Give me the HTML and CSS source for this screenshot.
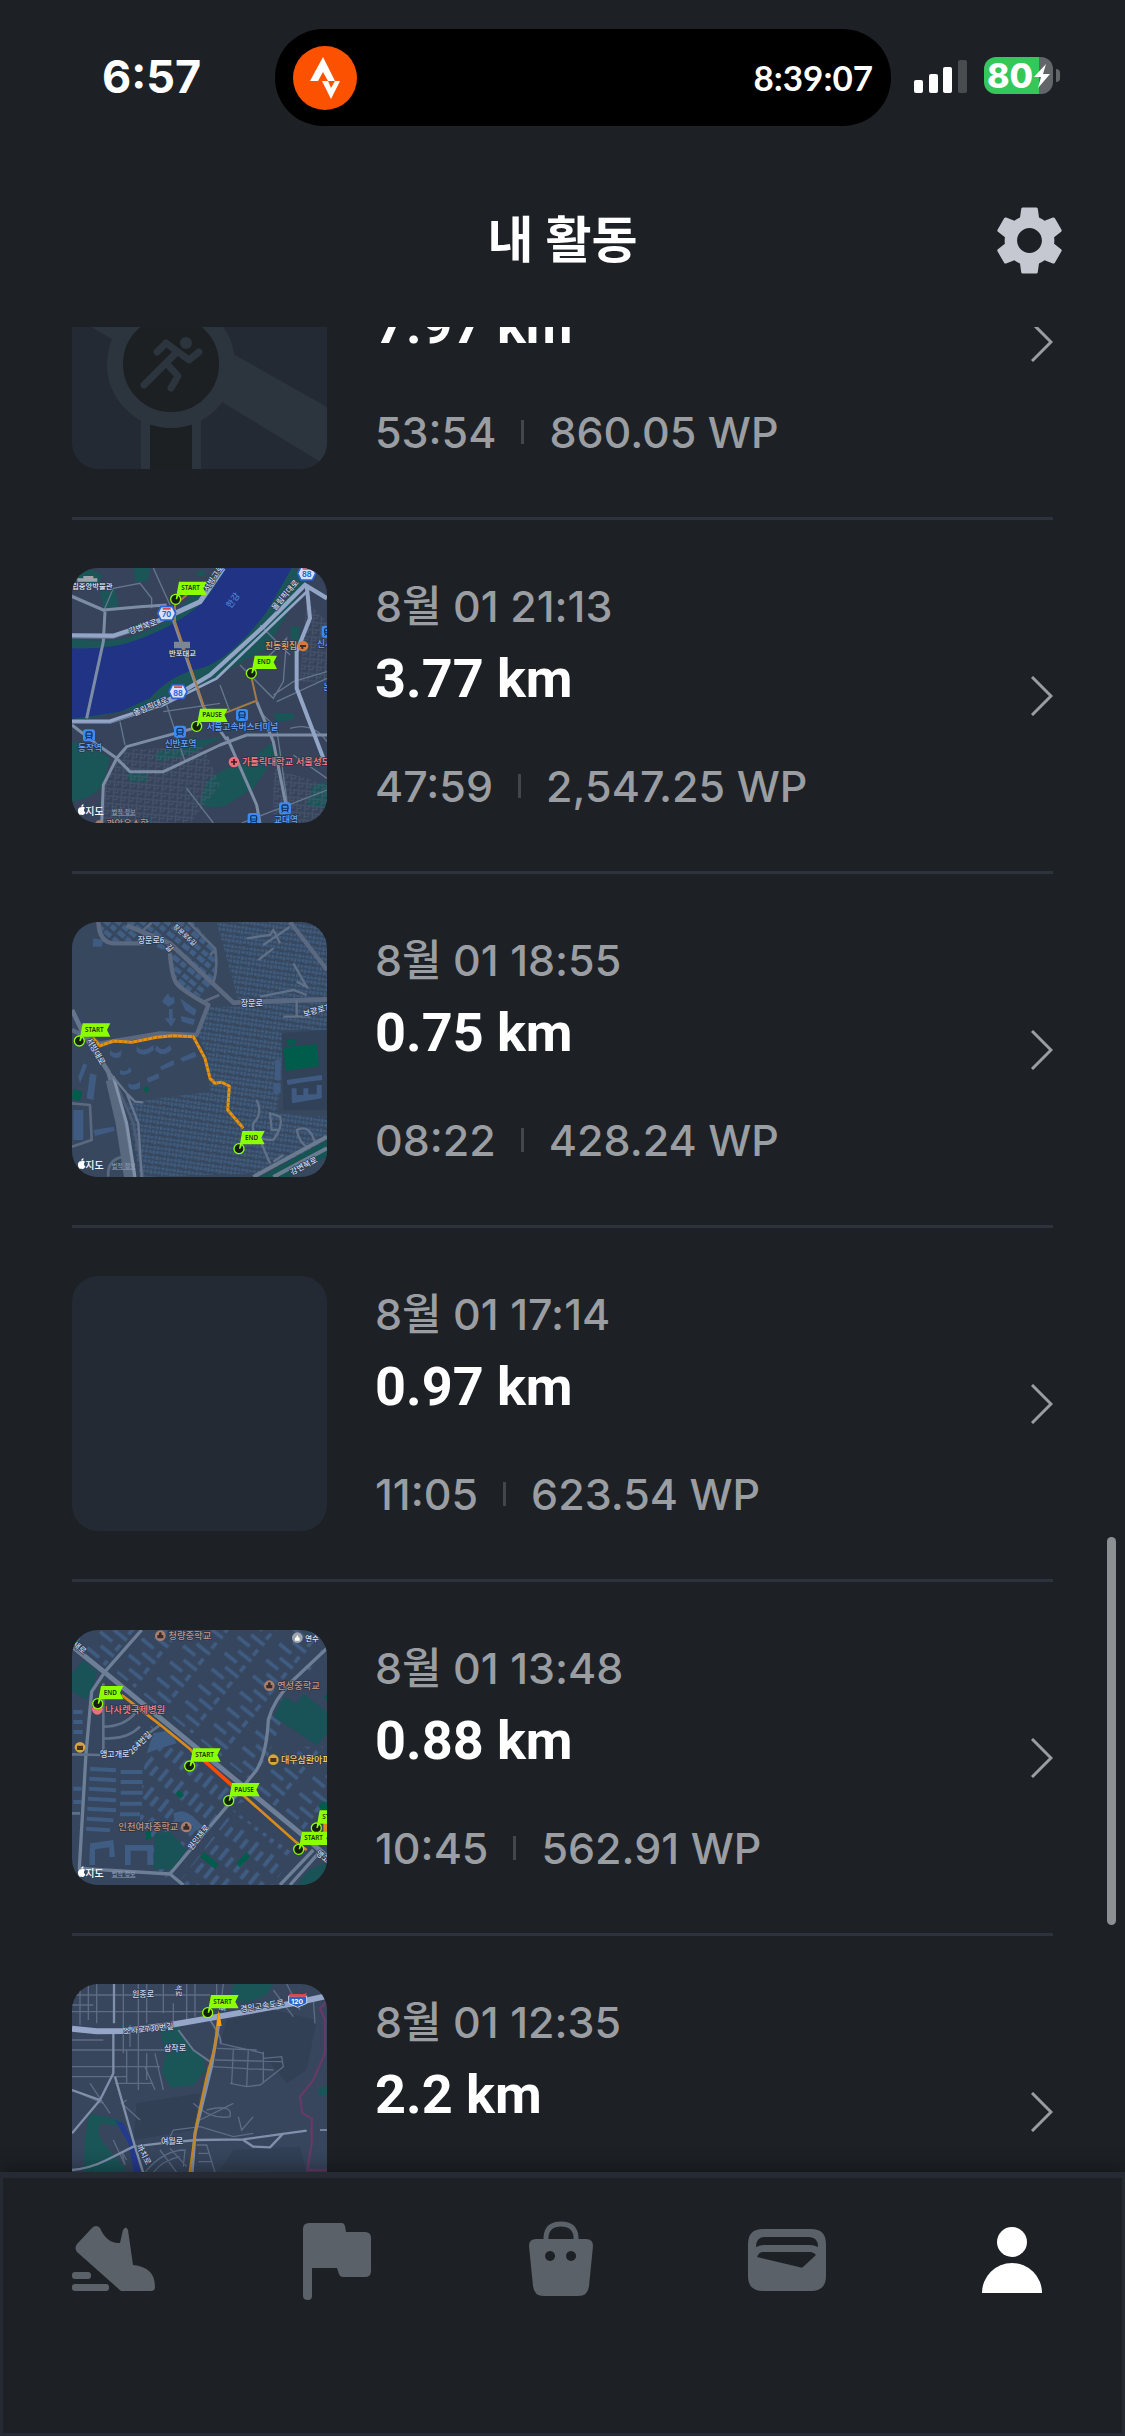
FILE: index.html
```html
<!DOCTYPE html>
<html lang="ko">
<head>
<meta charset="utf-8">
<meta name="viewport" content="width=device-width, initial-scale=1">
<title>내 활동</title>
<link rel="stylesheet" href="styles.css">
</head>
<body>
<svg class="defs" width="0" height="0" aria-hidden="true">
  <defs>
    <g id="flag-long"><circle r="15" fill="#17200f" stroke="#8cff00" stroke-width="4"/><path d="M0 0 10-53H93L83-33 93-13H10L4 0Z" fill="#8cff00"/></g>
    <g id="flag-short"><circle r="15" fill="#17200f" stroke="#8cff00" stroke-width="4"/><path d="M0 0 10-53H77L67-33 77-13H10L4 0Z" fill="#8cff00"/></g>
    <g id="shield"><path d="M-17-20H17L27 0 17 20H-17L-27 0Z" fill="#d7e0f5" stroke="#2c62d6" stroke-width="5"/><path d="M-12-16H12V-11H-12Z" fill="#d94b4b"/></g>
    <g id="station"><rect x="-18" y="-18" width="36" height="36" rx="8" fill="#3d8bf2"/><rect x="-9" y="-10" width="18" height="17" rx="5" fill="none" stroke="#15355f" stroke-width="4"/><path d="M-9 0H9M-6 7-10 13M6 7 10 13" stroke="#15355f" stroke-width="3"/></g>
    <g id="school"><circle r="16" fill="#a87f6c"/><path d="M-9 8V-2H-4V-8L0-11 4-8V-2H9V8Z" fill="#3a2a28"/></g>
    <g id="credit"><path d="M64 757c4-3 9-1 11 2-5 4-3 11 1 13-3 8-7 9-11 7-5 2-9-1-11-9-1-9 3-14 10-13Zm0-2c0-5 3-7 7-7 0 4-3 7-7 7Z" fill="#fff"/><text x="76" y="779" class="m-brand">지도</text><text x="155" y="777" class="m-legal">법적 정보</text></g>
    <pattern id="houses" width="34" height="30" patternUnits="userSpaceOnUse" patternTransform="rotate(8)"><path d="M1 2h10v8H1zM14 1h7v11h-7zM24 3h8v7h-8zM2 14h7v12H2zM12 16h11v7H12zM26 14h7v10h-7z" fill="#405c7e"/></pattern>
    <pattern id="roofs" width="58" height="46" patternUnits="userSpaceOnUse" patternTransform="rotate(39)"><path d="M3 4h20v14H3zM28 4h24v14H28zM3 25h24v15H3zM33 25h18v15H33z" fill="#415f85"/></pattern>
    <pattern id="slabs-a" width="110" height="62" patternUnits="userSpaceOnUse" patternTransform="rotate(39)"><path d="M6 8h46v11H6zM72 6h11v22H72zM34 40h50v11H34z" fill="#3f5c82"/></pattern>
    <pattern id="slabs-b" width="58" height="70" patternUnits="userSpaceOnUse" patternTransform="rotate(39)"><path d="M6 5h12v44H6zM34 18h12v34H34z" fill="#3f5c82"/></pattern>
    <pattern id="lanes" width="24" height="22" patternUnits="userSpaceOnUse" patternTransform="rotate(5)"><path d="M0 3H24M6 3V22M18 3V13H6" stroke="#4f5e73" stroke-width="2" fill="none"/></pattern>
  </defs>
</svg>

<header class="top">
  <div class="status">
    <span class="clock">6:57</span>
    <div class="island">
      <svg class="island-logo" viewBox="0 0 64 64" aria-label="Strava"><circle cx="32" cy="32" r="32" fill="#fc5200"/><path d="M30 11 17 35H25L30 26 35 35H42Z" fill="#fff"/><path d="M29 35H35L38 42 42 35H47L38 53Z" fill="#fff"/></svg>
      <span class="island-time">8:39:07</span>
    </div>
    <div class="indicators">
      <svg class="signal" viewBox="0 0 54 34" aria-hidden="true"><g fill="#fff"><rect y="21" width="9" height="13" rx="2"/><rect x="15" y="15" width="9" height="19" rx="2"/><rect x="29" y="8" width="9" height="26" rx="2"/></g><rect x="44" y="1" width="9" height="33" rx="2" fill="#484c4f"/></svg>
      <div class="battery"><span class="battery-level">80</span><svg class="bolt" viewBox="0 0 18 26" aria-hidden="true"><path d="M13 1 1 14H8L5 25 17 11H10Z" fill="#fff"/></svg></div>
    </div>
  </div>
  <div class="titlebar">
    <h1 class="title">내 활동</h1>
    <button class="settings" type="button" aria-label="설정"><svg viewBox="2 2 20 20"><path fill="#c5c8d0" d="M19.14 12.94c.04-.3.06-.61.06-.94 0-.32-.02-.64-.07-.94l2.03-1.58c.18-.14.23-.41.12-.61l-1.92-3.32c-.12-.22-.37-.29-.59-.22l-2.39.96c-.5-.38-1.03-.7-1.62-.94L14.4 2.81c-.04-.24-.24-.41-.48-.41h-3.84c-.24 0-.43.17-.47.41L9.25 5.35C8.66 5.59 8.12 5.92 7.63 6.29L5.24 5.33c-.22-.08-.47 0-.59.22L2.74 8.87c-.12.21-.08.47.12.61l2.03 1.58C4.84 11.36 4.8 11.69 4.8 12s.02.64.07.94l-2.03 1.58c-.18.14-.23.41-.12.61l1.92 3.32c.12.22.37.29.59.22l2.39-.96c.5.38 1.03.7 1.62.94l.36 2.54c.05.24.24.41.48.41h3.84c.24 0 .44-.17.47-.41l.36-2.54c.59-.24 1.13-.56 1.62-.94l2.39.96c.22.08.47 0 .59-.22l1.92-3.32c.12-.22.07-.47-.12-.61L19.14 12.94zM12 15.6c-1.98 0-3.6-1.62-3.6-3.6s1.62-3.6 3.6-3.6 3.6 1.62 3.6 3.6-1.62 3.6-3.6 3.6z"/></svg></button>
  </div>
</header>

<main class="feed">
  <ul class="list">
    <li class="item"><a class="row" href="#activity-1">
      <svg class="thumb" viewBox="0 0 255 255" aria-hidden="true">
        <path d="M-40 78 99 160 150 188 255 252V193L163 141 60 82-20 40Z" fill="#2c343e"/>
        <path d="M78 200H120V255H78Z" fill="#1c2023"/><path d="M69 195H78V255H69ZM120 195H129V255H120Z" fill="#2c343e"/>
        <circle cx="99" cy="150" r="56" fill="#1c2023" stroke="#2c343e" stroke-width="16"/>
        <circle cx="114" cy="129" r="6" fill="#2c343e"/>
        <path d="M85 138 94 129 117 146 127 138M72 171 104 139M97 152 106 162 99 174" fill="none" stroke="#2c343e" stroke-width="7" stroke-linecap="round" stroke-linejoin="round"/>
      </svg>
      <div class="info"><span class="date">8월 01 22:20</span><strong class="distance">7.97 km</strong><span class="stats"><span>53:54</span><span class="bar"></span><span>860.05 WP</span></span></div>
      <svg class="chevron" viewBox="0 0 22 40" aria-hidden="true"><path d="M1 1 20 20 1 39"/></svg>
    </a></li>

    <li class="item"><a class="row" href="#activity-2">
      <svg class="thumb" viewBox="36 39 765 765" aria-hidden="true">
        <path d="M36 39H801V804H36Z" fill="#36435a"/>
        <path d="M36 560Q100 570 150 610L130 690Q100 730 36 740ZM36 39H80L130 60 110 90 36 70ZM220 39H270L262 80H225ZM120 110 165 100 175 155 130 160ZM440 680Q480 640 560 620L640 560 650 600 580 700 500 750Q440 770 420 740ZM280 600 370 560 490 545 380 600 300 620ZM640 475H700V495L650 500ZM690 215H720L715 300H700ZM760 690 801 680V760L740 750ZM200 655H260V680H210ZM410 48H435V62H412Z" fill="#1a5558"/>
        <path d="M36 250Q200 280 330 190L480 39H495L700 39 740 80 620 280 460 370 290 450 36 500Z" fill="#1b5558"/>
        <path d="M36 280Q150 285 230 255 340 215 400 165 450 130 495 39H695L620 170Q500 330 400 345 320 370 270 430L180 470 36 492Z" fill="#213384"/>
        <path d="M180 585 430 575 480 690 390 804H130V690ZM640 640 801 690V804H640ZM740 140 801 200V380H720Z" fill="url(#lanes)"/>
        <g fill="none" stroke="#65768e" stroke-width="4"><path d="M320 450 375 620M180 500 195 570M310 470 480 445M480 390 510 470M540 330 640 430 670 380 680 250 570 360M600 210 690 300M650 440 801 370M36 120 135 165M280 39 330 150M130 170 160 100 240 85 275 130V160M600 470 650 520 690 800M700 600 801 670M380 700 460 804M545 804 801 705M640 420 700 380 801 350M690 520Q760 500 801 560"/></g>
        <g fill="none" stroke="#7d8ca5" stroke-width="9" stroke-linejoin="round"><path d="M36 125 130 165 240 155 320 150M135 170 130 260 80 490M500 545 590 750 600 804M36 510 100 560 170 610 210 650 310 650 480 570 560 540 801 540M170 610 130 690 125 804M170 610 200 575 400 520M590 440 640 560 680 760M500 555 430 455 340 195"/></g>
        <g fill="none" stroke="#93a5c6"><path d="M36 242 160 243 290 200 420 140 490 39" stroke-width="15"/><path d="M36 500H150L300 450 450 360 610 215 735 90 801 130" stroke-width="13"/><path d="M300 455 470 370 740 110" stroke-width="8"/><path d="M740 90 750 190 710 290V400L790 610" stroke-width="12"/></g>
        <path d="M36 248 160 250 290 208M36 505H150L290 455" fill="none" stroke="#4d5c78" stroke-width="2"/>
        <path d="M380 120 345 150 345 200 432 455 430 475 500 472 590 437 575 370" fill="none" stroke="#a47b46" stroke-width="6"/>
        <text x="36" y="103" class="m-white">립중앙박물관</text><path d="M52 70H112V80H52ZM70 63H100V70H70Z" fill="#9ca4ae"/>
        <text x="210" y="238" class="m-road" transform="rotate(-20 210 238)">강변북로</text>
        <text x="224" y="483" class="m-road" transform="rotate(-23 224 483)">올림픽대로</text>
        <text x="646" y="168" class="m-road" transform="rotate(-50 646 168)">올림픽대로</text>
        <text x="442" y="110" class="m-road" transform="rotate(-55 442 110)">서빙고로</text>
        <text x="512" y="162" class="m-water" transform="rotate(-55 512 162)">한강</text>
        <path d="M342 260H390V280H342Z" fill="#7c8694"/><text x="327" y="304" class="m-white">반포대교</text>
        <text x="615" y="283" class="m-food">진동횟집</text><circle cx="729" cy="273" r="16" fill="#d27a3e"/><path d="M720 270H738V276H730V282H724V276H720Z" fill="#4c2a19"/>
        <use href="#station" x="87" y="541"/><text x="54" y="587" class="m-rail">동작역</text>
        <use href="#station" x="360" y="530"/><text x="314" y="576" class="m-rail">신반포역</text>
        <use href="#station" x="546" y="480"/><text x="440" y="525" class="m-rail">서울고속버스터미널</text>
        <use href="#station" x="675" y="760"/><text x="642" y="803" class="m-rail">교대역</text>
        <use href="#station" x="581" y="792"/><use href="#station" x="803" y="230"/><text x="771" y="275" class="m-rail">신사</text><text x="790" y="405" class="m-rail">논</text>
        <circle cx="522" cy="621" r="16" fill="#e9707a"/><path d="M513 621H531M522 612V630" stroke="#3b1a26" stroke-width="5"/><text x="545" y="631" class="m-med">가톨릭대학교 서울성모병원</text>
        <use href="#shield" x="320" y="175"/><text x="306" y="187" class="m-num">70</text><use href="#shield" x="354" y="410"/><text x="340" y="422" class="m-num">88</text><use href="#shield" x="740" y="55"/><text x="726" y="67" class="m-num">88</text>
        <use href="#flag-long" x="347" y="133"/><text x="364" y="106" class="m-flag">START</text>
        <use href="#flag-short" x="574" y="355"/><text x="592" y="328" class="m-flag">END</text>
        <use href="#flag-long" x="410" y="514"/><text x="427" y="487" class="m-flag">PAUSE</text>
        <use href="#credit"/><circle cx="118" cy="810" r="14" fill="#a87f6c"/><text x="138" y="815" class="m-school">관악우스함</text>
      </svg>
      <div class="info"><span class="date">8월 01 21:13</span><strong class="distance">3.77 km</strong><span class="stats"><span>47:59</span><span class="bar"></span><span>2,547.25 WP</span></span></div>
      <svg class="chevron" viewBox="0 0 22 40" aria-hidden="true"><path d="M1 1 20 20 1 39"/></svg>
    </a></li>

    <li class="item"><a class="row" href="#activity-3">
      <svg class="thumb" viewBox="36 36 765 765" aria-hidden="true">
        <path d="M36 36H801V801H36Z" fill="#36475e"/>
        <path d="M470 36H801V360H665V500L650 610 801 620V700L600 790 240 801 200 580 330 560 450 545 440 430 410 370 440 290 540 290Z" fill="url(#houses)"/>
        <path d="M120 36H400L470 120 460 220 420 260 345 220 335 130 250 95H125Z" fill="url(#roofs)"/>
        <path d="M665 370 801 360V600L670 600Z" fill="#314158"/>
        <path d="M315 260 325 250 330 262H343V280L325 290 306 275ZM327 297H338V325H348L334 350 314 325H327ZM360 265 410 300 403 318 375 300ZM362 318 405 328 400 345 365 335ZM290 405Q305 430 330 405L335 420Q308 445 285 420ZM230 410Q250 430 280 405L282 420Q250 445 230 425ZM150 420Q165 440 185 420L182 440Q162 450 150 435ZM180 480Q200 490 210 470L215 485Q195 500 180 492ZM205 520Q220 530 240 515L240 535Q215 545 205 530ZM260 505 295 490 298 505 265 518ZM300 470 340 450 343 465 305 480ZM360 445 405 425 410 440 368 455ZM55 500 70 460 82 465 60 520ZM90 490 110 495 100 570 80 565ZM100 660 160 650 165 662 105 678ZM645 450H662V510H645ZM680 510 785 495 787 510 730 517 683 525ZM695 570V535H710V555H730V535H745V553H770V525H785V565L697 580ZM640 520H662V550H640ZM100 85 130 90 125 110H98ZM40 600H70V690H40Z" fill="#405b82"/>
        <path d="M669 412 770 402 777 468 677 482ZM680 390 708 386V402L682 405ZM40 537 67 545 60 573 36 568ZM249 538 260 527 268 538 259 549Z" fill="#005d4c"/>
        <path d="M600 801 801 690V740L690 801Z" fill="#155452"/>
        <g fill="none" stroke="#5b6980" stroke-linejoin="round"><path d="M115 36Q118 98 160 100H250M330 130Q335 200 350 220T445 285L410 375 300 370 120 400 36 360M690 36 801 180" stroke-width="13"/><path d="M200 46 330 100 520 278 801 268" stroke-width="14"/><path d="M385 36 465 115Q475 170 460 220M430 275 478 255M250 60 275 38M450 135 468 118M145 800Q140 750 190 740M36 580 90 585 95 690 36 710" stroke-width="8"/></g>
        <g fill="none" stroke="#5f7087" stroke-width="7"><path d="M560 85 630 75 640 60 660 100M610 105 690 50M595 150 640 115M700 160 740 230 710 215M600 260 700 240 740 255M710 270V320H670M670 320H750M590 570Q610 610 580 640 570 690 640 690 670 650 660 620L630 610 635 660H655M600 690 630 760M765 700Q750 640 710 660 720 700 740 710M640 755 670 735"/></g>
        <g fill="none"><path d="M36 300 70 370 145 485 190 640 215 801" stroke="#65758d" stroke-width="14"/><path d="M150 510 180 640 205 801" stroke="#59697f" stroke-width="26"/><path d="M160 500 220 640 250 801" stroke="#4c5c74" stroke-width="8"/><path d="M160 500 200 640 225 801" stroke="#8292aa" stroke-width="9"/><path d="M150 490 200 550 235 640 245 801M200 550 225 575 250 577" stroke="#66778f" stroke-width="7"/><path d="M580 801 801 680M640 801 801 715" stroke="#6b7b90" stroke-width="12"/></g>
        <path d="M98 382 118 408 160 393 215 397 290 382 340 377 400 380 435 445 450 505 465 520 485 517 508 528 503 600 550 655" fill="none" stroke="#e09413" stroke-width="9" stroke-linejoin="round"/><path d="M98 382 118 408 160 393 215 397 290 382 340 377 400 380 435 445 450 505 465 520 485 517 508 528 503 600 550 655" fill="none" stroke="#c86a0c" stroke-width="9" stroke-dasharray="3 12"/>
        <text x="233" y="98" class="m-road">장문로6</text><text x="314" y="112" class="m-road" transform="rotate(45 314 112)">길</text>
        <text x="338" y="52" class="m-road small" transform="rotate(42 338 52)">장문로6길</text>
        <text x="542" y="287" class="m-road">장문로</text><text x="732" y="320" class="m-road" transform="rotate(-15 732 320)">보광로7길</text>
        <text x="78" y="390" class="m-road" transform="rotate(60 78 390)">서빙대로</text><text x="696" y="796" class="m-road" transform="rotate(-28 696 796)">강변북로</text>
        <use href="#flag-long" x="58" y="393"/><text x="75" y="366" class="m-flag">START</text>
        <use href="#flag-short" x="537" y="716"/><text x="555" y="689" class="m-flag">END</text>
        <use href="#credit" y="-3"/>
      </svg>
      <div class="info"><span class="date">8월 01 18:55</span><strong class="distance">0.75 km</strong><span class="stats"><span>08:22</span><span class="bar"></span><span>428.24 WP</span></span></div>
      <svg class="chevron" viewBox="0 0 22 40" aria-hidden="true"><path d="M1 1 20 20 1 39"/></svg>
    </a></li>

    <li class="item"><a class="row" href="#activity-4">
      <div class="thumb"></div>
      <div class="info"><span class="date">8월 01 17:14</span><strong class="distance">0.97 km</strong><span class="stats"><span>11:05</span><span class="bar"></span><span>623.54 WP</span></span></div>
      <svg class="chevron" viewBox="0 0 22 40" aria-hidden="true"><path d="M1 1 20 20 1 39"/></svg>
    </a></li>

    <li class="item"><a class="row" href="#activity-5">
      <svg class="thumb" viewBox="36 30 765 765" aria-hidden="true">
        <path d="M36 30H801V795H36Z" fill="#36465e"/>
        <path d="M230 30H801V90L700 210 620 420 570 480 170 160ZM36 30H230L140 140 36 70Z" fill="url(#slabs-a)"/>
        <path d="M130 190 570 540 500 560 330 760 300 795 240 600 250 450 280 330ZM520 570 700 700 640 795H350Z" fill="url(#slabs-b)"/>
        <path d="M655 380 801 380V680L720 650 570 500Z" fill="url(#slabs-a)"/>
        <path d="M90 440 168 445V457L90 453ZM88 470 168 475V487L88 482ZM86 500 168 505V517L86 512ZM84 530 168 535V547L84 542ZM82 560 168 565V577L82 572ZM80 590 160 595V607L80 602ZM78 620 150 625V637L78 632ZM182 450H248V462H182ZM182 480H248V492H182ZM182 512H248V524H182ZM180 545H246V557H180ZM180 577H240V589H180ZM40 270H68V282H40ZM40 300H68V312H40ZM40 330H68V342H40ZM40 500H65V512H40ZM40 540H65V552H40ZM90 670 160 660 165 710 148 712V682L105 688V735H88ZM195 675H280V735H262V692H212V735H195ZM280 340 330 330 350 370 300 385 260 400ZM340 580Q370 565 400 590L430 620 415 635 380 605H345Z" fill="#3f5c82"/>
        <path d="M70 120 112 155 100 200 80 240 36 215V160ZM640 290 670 230 710 250 730 222 801 275V340L772 376ZM285 640 330 635 380 690 340 748H280ZM715 795Q740 740 801 730V795Z" fill="#1a5357"/><path d="M421 710 432 697 475 732 465 747ZM528 730 560 697 570 710 540 742ZM346 522 356 510 372 524 362 536ZM258 636 273 630V655L258 660ZM775 560 790 543 801 550V580ZM792 230 801 222V240Z" fill="#005d4c"/>
        <g fill="none" stroke="#6d7e97" stroke-linejoin="round"><path d="M36 78 135 158 740 655 801 710" stroke-width="15"/><path d="M245 30 135 155 95 215 78 400 58 745 330 762 370 795M330 762 500 560 590 450Q620 400 625 300 640 240 700 180L801 85M660 795 760 690M690 795 775 700" stroke-width="10"/><path d="M130 190V400M130 320Q190 320 225 280M130 355Q200 360 240 320M36 403 120 405M36 580H60M225 370 300 315" stroke-width="8" stroke="#5f7089"/></g>
        <path d="M185 225 295 310 390 387 410 410M520 500 560 535 710 668 740 690" fill="none" stroke="#d68a1c" stroke-width="8"/><path d="M425 415 520 500" stroke="#ff4a00" stroke-width="11"/>
        <path d="M790 610 801 600V640H790Z" fill="#e08914"/>
        <use href="#school" x="301" y="47"/><text x="325" y="57" class="m-school">청량중학교</text>
        <circle cx="712" cy="53" r="16" fill="#9da4ac"/><path d="M705 62V53H708L712 44 716 53H719V62Z" fill="#fff"/><text x="736" y="62" class="m-white">연수</text>
        <use href="#school" x="628" y="197"/><text x="651" y="207" class="m-school">연성중학교</text>
        <use href="#school" x="379" y="621"/><text x="175" y="631" class="m-school">인천여자중학교</text>
        <circle cx="60" cy="382" r="16" fill="#d7a43e"/><path d="M51 377H69V390H51Z" fill="#4a3516"/><circle cx="640" cy="419" r="16" fill="#d7a43e"/><path d="M631 414H649V426H631Z" fill="#4a3516"/><text x="663" y="430" class="m-shop">대우삼환아파트</text>
        <circle cx="112" cy="268" r="16" fill="#e9707a"/><text x="135" y="278" class="m-med">나사렛국제병원</text>
        <text x="120" y="410" class="m-road">앵고개로</text><text x="216" y="405" class="m-road" transform="rotate(-45 216 405)">264번길</text>
        <text x="36" y="75" class="m-road" transform="rotate(40 36 75)">새로</text><text x="395" y="692" class="m-road" transform="rotate(-52 395 692)">원인재로</text><text x="766" y="702" class="m-road" transform="rotate(40 766 702)">앵고개로</text>
        <use href="#flag-short" x="113" y="251"/><text x="131" y="224" class="m-flag">END</text>
        <use href="#flag-long" x="389" y="438"/><text x="406" y="411" class="m-flag">START</text>
        <use href="#flag-long" x="506" y="542"/><text x="523" y="515" class="m-flag">PAUSE</text>
        <use href="#flag-long" x="769" y="624"/><text x="787" y="597" class="m-flag">START</text>
        <use href="#flag-long" x="716" y="688"/><text x="733" y="661" class="m-flag">START</text>
        <use href="#credit" y="-9"/>
      </svg>
      <div class="info"><span class="date">8월 01 13:48</span><strong class="distance">0.88 km</strong><span class="stats"><span>10:45</span><span class="bar"></span><span>562.91 WP</span></span></div>
      <svg class="chevron" viewBox="0 0 22 40" aria-hidden="true"><path d="M1 1 20 20 1 39"/></svg>
    </a></li>

    <li class="item"><a class="row" href="#activity-6">
      <svg class="thumb" viewBox="36 42 765 765" aria-hidden="true">
        <path d="M36 42H801V807H36Z" fill="#37465d"/>
        <path d="M500 150 640 120 770 150 740 300 680 340 600 240 480 220ZM230 400 420 370 400 480 220 510ZM520 540 720 530 740 607 480 600Z" fill="#324055"/>
        <path d="M302 180 355 170 375 210 400 240 430 265 438 300 400 345 335 355 305 310 315 260ZM520 42H640L620 75 560 100 510 90ZM90 430 180 450 190 470 120 460 115 490 130 520 200 600 70 620 75 500ZM772 360 801 345V375H775Z" fill="#1a5558"/>
        <path d="M165 450 190 460 220 520 245 620H225L205 520Z" fill="#243a8f"/>
        <g fill="none" stroke="#5d6c83" stroke-width="4"><path d="M60 42V165M85 42V150M110 42V160M190 42V250M235 42V360M260 42V160M310 42V130M340 100V160M405 42V140M36 75H450M36 105H100M36 125H440M36 210H130M36 240H380M36 290H300M36 320H200M165 340H280M200 240V340M260 250V330M285 250 310 360M255 290 285 360M210 165V230M380 42V150M470 235 590 240M480 220 610 250M465 270 665 275M455 290 640 300M510 340 560 350 600 345 670 290 665 260 610 265M520 240 515 340M565 240 560 350M610 245V340M445 290 440 330M640 60 700 140M680 42 720 120M620 100 760 90M650 120 740 70M760 90 765 160M470 42V80M490 42 480 120M200 390 185 400 240 450M90 340 150 430M36 360 130 400M420 450 520 400M400 400Q450 450 510 440 520 400 440 420M535 440 545 480 580 440M320 520 340 480 420 470 520 500 580 490M255 607Q310 540 375 540L370 590M280 607Q310 570 360 560M300 540 350 607M330 535 380 590M410 525H440L465 607M415 550H450M415 575H455M160 510 195 585 185 545 200 570"/></g>
        <g fill="none" stroke="#8090aa" stroke-linejoin="round"><path d="M162 42V160M160 185V310L120 390 36 490M165 320 225 530 255 625M36 600Q90 595 140 570L220 530 300 520 410 510 550 508 740 482M550 510 580 530 630 532 670 490M36 360 120 390" stroke-width="7"/><path d="M780 480H801" stroke-width="5"/><path d="M355 180 400 240 450 275M450 150Q490 210 480 220" stroke-width="6" stroke="#66768d"/><path d="M36 176 110 184 190 183 330 165 475 140 700 100 792 80" stroke-width="18" stroke="#95a6c8"/><path d="M478 150 455 285 405 490 395 620" stroke-width="10"/></g>
        <path d="M801 95 780 115 795 150V250L760 330 720 380 727 430 755 445V520L742 600H801" fill="none" stroke="#663a68" stroke-width="7"/>
        <path d="M476 130 465 230 440 320 410 460 387 620" fill="none" stroke="#c58524" stroke-width="7"/><path d="M476 120 485 168H470Z" fill="#ffa000"/>
        <text x="216" y="82" class="m-road">원종로</text><text x="312" y="244" class="m-road">삼작로</text><text x="303" y="523" class="m-road">여월로</text>
        <text x="191" y="193" class="m-road" transform="rotate(-6 191 193)">소사로730번길</text><text x="542" y="126" class="m-road" transform="rotate(-9 542 126)">경인고속도로</text><text x="228" y="528" class="m-road" transform="rotate(62 228 528)">까치로</text>
        <text x="349" y="44" class="m-road small" transform="rotate(90 349 44)">석로</text><text x="496" y="125" class="m-road" transform="rotate(-85 496 125)">로</text>
        <path d="M686 78H740V100L713 112 686 100Z" fill="#2b62c8" stroke="#c6d4ee" stroke-width="3"/><path d="M688 72H738V80H688Z" fill="#d94b4b"/><text x="694" y="103" class="m-num light">120</text>
        <use href="#flag-long" x="443" y="128"/><text x="460" y="101" class="m-flag">START</text>
      </svg>
      <div class="info"><span class="date">8월 01 12:35</span><strong class="distance">2.2 km</strong><span class="stats"><span>24:10</span><span class="bar"></span><span>1,204.60 WP</span></span></div>
      <svg class="chevron" viewBox="0 0 22 40" aria-hidden="true"><path d="M1 1 20 20 1 39"/></svg>
    </a></li>
  </ul>
  <div class="scroll-indicator"></div>
</main>

<nav class="tabs" aria-label="메뉴">
  <a class="tab" href="#run" aria-label="러닝"><svg viewBox="0 0 90 90"><path d="M22 11Q26 7 30 11 37 27 50 26L53 13Q56 8 58 13L63 48Q85 50 85 70 85 74 81 74H51L7 35Q4 31 7 27Z"/><rect x="2" y="55" width="19" height="7" rx="3"/><rect x="2" y="67" width="37" height="7" rx="3"/></svg></a>
  <a class="tab" href="#goals" aria-label="목표"><svg viewBox="0 0 90 90"><path d="M15 6H48Q50 6 51 9L52 15H71Q77 15 77 21V54Q77 60 71 60H49Q46 60 45 57L43 51H18V79Q18 83 14 83 9 83 9 79V12Q9 6 15 6Z"/></svg></a>
  <a class="tab" href="#shop" aria-label="상점"><svg viewBox="0 0 90 90"><path d="M29 25V20Q30 7 44 7T59 20V25" fill="none" stroke="currentColor" stroke-width="5"/><path fill-rule="evenodd" d="M19 22H69Q76 22 76 29L72 69Q71 79 61 79H27Q17 79 16 69L12 29Q12 22 19 22ZM33 34a5 5 0 1 0 .1 0ZM54 34a5 5 0 1 0 .1 0Z"/></svg></a>
  <a class="tab" href="#wallet" aria-label="지갑"><svg viewBox="0 0 90 90"><path fill-rule="evenodd" d="M22 12H70Q85 12 85 27V59Q85 74 70 74H22Q7 74 7 59V27Q7 12 22 12ZM15 30Q15 20 24 20H68Q77 20 77 30 73 28 69 28H23Q19 28 15 30ZM16 40Q18 35 22 35H70Q74 36 75 38L62 50Q61 51 58 50Z"/></svg></a>
  <a class="tab active" href="#me" aria-label="내 활동" aria-current="page"><svg viewBox="0 0 90 90"><circle cx="47" cy="25" r="15"/><path d="M17 76A30 30 0 0 1 77 76Z"/></svg></a>
</nav>
</body>
</html>
```
FILE: styles.css
```css
* { box-sizing: border-box; }

body {
  margin: 0;
  height: 100vh;
  display: flex;
  flex-direction: column;
  overflow: hidden;
  background: #1d2125;
  color: #fff;
  font-family: Inter, "Noto Sans CJK KR", sans-serif;
}

a { color: inherit; text-decoration: none; }
svg { display: block; }
.defs { position: absolute; }

/* status bar */
.top { flex: none; }
.status {
  display: grid;
  grid-template-columns: 275fr 616fr 234fr;
  padding-top: 29px;
  height: 126px;
  align-items: center;
}
.clock {
  padding: 0 0 3px 28px;
  text-align: center;
  font-size: 45px;
  font-weight: 700;
}
.island {
  display: flex;
  align-items: center;
  justify-content: space-between;
  height: 97px;
  padding: 0 18px;
  border-radius: 48px;
  background: #000;
}
.island-logo { width: 64px; height: 64px; }
.island-time { font: 700 35px/40px Lato, sans-serif; padding-bottom: 2px; }
.indicators {
  display: flex;
  align-items: center;
  gap: 16px;
  padding: 0 0 4px 23px;
}
.signal { width: 54px; height: 34px; }
.battery {
  position: relative;
  display: flex;
  align-items: center;
  width: 69px;
  height: 37px;
  padding-left: 3px;
  border-radius: 12px;
  background: linear-gradient(90deg, #34c759 80%, #636669 80%);
}
.battery::after {
  content: "";
  position: absolute;
  left: 72px;
  top: 12px;
  width: 4px;
  height: 13px;
  border-radius: 0 4px 4px 0;
  background: #636669;
}
.battery-level { font-size: 34px; line-height: 36px; font-weight: 800; }
.bolt { flex: none; width: 18px; height: 26px; }

/* title bar */
.titlebar {
  display: grid;
  grid-template-columns: 1fr auto 1fr;
  align-items: center;
  height: 201px;
  padding: 27px 61px 0;
}
.title {
  grid-column: 2;
  margin: 0;
  font-size: 50px;
  line-height: 64px;
  font-weight: 700;
}
.settings {
  justify-self: end;
  width: 69px;
  height: 69px;
  padding: 0;
  border: 0;
  background: none;
}

/* activity list, scrolled part-way under the title bar */
.feed {
  position: relative;
  flex: 1;
  min-height: 0;
  overflow: hidden;
}
.list {
  margin: -161px 0 0;
  padding: 0 72px;
  list-style: none;
}
.item { border-bottom: 3px solid #2c333d; }
.row {
  display: flex;
  align-items: center;
  gap: 48px;
  padding: 48px 0;
}
.thumb {
  flex: none;
  width: 255px;
  height: 255px;
  border-radius: 26px;
  overflow: hidden;
  background: #232a33;
}
.info { flex: 1; display: flex; flex-direction: column; color: #9a9ea3; }
.date, .stats { font-size: 43px; line-height: 52px; font-weight: 500; }
.distance {
  margin: 15px 0 49px;
  color: #fff;
  font: 700 54px/64px Roboto, sans-serif;
}
.stats { display: flex; align-items: center; gap: 25px; }
.bar { width: 3px; height: 24px; background: #43474c; }
.chevron { width: 22px; height: 40px; }
.chevron path { fill: none; stroke: #9a9ea3; stroke-width: 3; }

.scroll-indicator {
  position: absolute;
  right: 9px;
  top: 1210px;
  width: 9px;
  height: 388px;
  border-radius: 5px;
  background: #8d9092;
}

/* map lettering */
text { font-family: "Noto Sans CJK KR", sans-serif; font-weight: 500; }
.m-flag { font: 600 19px "Noto Sans", sans-serif; fill: #1c3300; }
.m-num { font: 700 22px Inter, sans-serif; fill: #2c62d6; }
.m-num.light { font-size: 20px; fill: #fff; }
.m-road { font-size: 24px; fill: #cbd8f0; stroke: #2c3a50; stroke-width: 4px; paint-order: stroke; }
.m-road.small { font-size: 20px; }
.m-white { font-size: 22px; fill: #e4eaf5; stroke: #2c3a50; stroke-width: 4px; paint-order: stroke; }
.m-water { font-size: 27px; fill: #4c80d2; }
.m-rail { font-size: 26px; fill: #64a5ff; stroke: #22314a; stroke-width: 4px; paint-order: stroke; }
.m-food { font-size: 26px; fill: #f2a25c; stroke: #2c3344; stroke-width: 4px; paint-order: stroke; }
.m-med { font-size: 28px; fill: #ff7d88; stroke: #2c3344; stroke-width: 4px; paint-order: stroke; }
.m-school { font-size: 28px; fill: #bd9684; stroke: #2c3344; stroke-width: 4px; paint-order: stroke; }
.m-shop { font-size: 27px; fill: #f5cf5c; stroke: #2c3344; stroke-width: 4px; paint-order: stroke; }
.m-brand { font-size: 30px; fill: #fff; }
.m-legal { font-size: 18px; fill: #8d9bb0; text-decoration: underline; }

/* tab bar */
.tabs {
  position: relative;
  flex: none;
  display: flex;
  height: 264px;
  padding-top: 39px;
  border: 3px solid #252a33;
  border-top-width: 6px;
  background: #1d2125;
  box-shadow: 0 -4px 18px rgba(0, 0, 0, .35);
}
.tab { flex: 1; display: flex; justify-content: center; color: #5b6168; }
.tab svg { width: 90px; height: 90px; fill: currentColor; }
.tab.active { color: #fff; }
```
